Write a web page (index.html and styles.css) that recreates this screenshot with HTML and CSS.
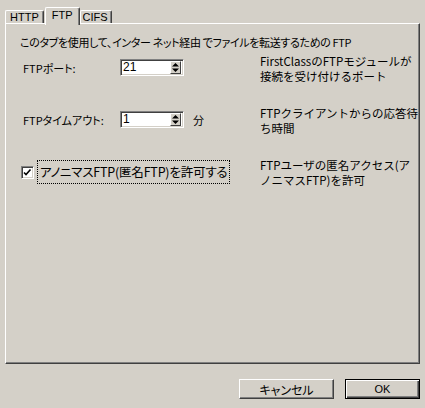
FILE: index.html
```html
<!DOCTYPE html>
<html lang="ja">
<head>
<meta charset="utf-8">
<link rel="stylesheet" href="styles.css">
</head>
<body>
<div class="dialog">
  <div class="tabs">
    <div class="tab">HTTP</div>
    <div class="tab active">FTP</div>
    <div class="tab cifs">CIFS</div>
  </div>
  <div class="panel">
    <div class="intro">このタブを使用して、インター ネット経由 でファイルを転送するための FTP</div>
    <div class="rows">
      <div class="row">
        <div class="left">
          <span class="label">FTPポート:</span>
          <div class="spin"><span class="val">21</span><span class="spinbtn"><svg width="9" height="11" viewBox="0 0 9 11"><path d="M4.5 1 L8 4.5 L1 4.5 Z M1 6.5 L8 6.5 L4.5 10 Z" fill="#000"/></svg></span></div>
        </div>
        <div class="desc">FirstClassのFTPモジュールが<br>接続を受け付けるポート</div>
      </div>
      <div class="row">
        <div class="left">
          <span class="label">FTPタイムアウト:</span>
          <div class="spin"><span class="val">1</span><span class="spinbtn"><svg width="9" height="11" viewBox="0 0 9 11"><path d="M4.5 1 L8 4.5 L1 4.5 Z M1 6.5 L8 6.5 L4.5 10 Z" fill="#000"/></svg></span></div>
          <span class="unit">分</span>
        </div>
        <div class="desc">FTPクライアントからの応答待<br>ち時間</div>
      </div>
      <div class="row">
        <div class="left check">
          <span class="box"><svg width="9" height="9" viewBox="0 0 9 9"><path d="M1 4.5 L3 6.5 L7.5 1.5" stroke="#000" stroke-width="1.6" fill="none"/></svg></span>
          <span class="cblabel">アノニマスFTP(匿名FTP)を許可する</span>
        </div>
        <div class="desc">FTPユーザの匿名アクセス(ア<br>ノニマスFTP)を許可</div>
      </div>
    </div>
  </div>
  <div class="buttons">
    <div class="btn cancel">キャンセル</div>
    <div class="btn ok">OK</div>
  </div>
</div>
</body>
</html>
```
FILE: styles.css
```css
html, body {
  margin: 0;
  padding: 0;
  background: #d4d0c8;
}
body {
  width: 425px;
  height: 408px;
  overflow: hidden;
  font-family: "Noto Sans CJK JP", "Liberation Sans", sans-serif;
  font-size: 11px;
  color: #000;
  font-feature-settings: "palt";
}
.dialog {
  display: flex;
  flex-direction: column;
}
.tabs {
  display: flex;
  align-items: flex-end;
  height: 23px;
  padding-left: 5px;
}
.tab {
  height: 12px;
  line-height: 12px;
  padding: 0 4px;
  font-size: 11px;
  font-family: "Liberation Sans", sans-serif;
  border-top: 1px solid #fff;
  border-left: 1px solid #fff;
  border-right: 1px solid #404040;
  box-shadow: inset -1px 0 0 #808080;
  border-radius: 2px 2px 0 0;
}
.tab.cifs {
  padding: 0 3px 0 2px;
}
.tab.active {
  position: relative;
  z-index: 1;
  height: 17px;
  line-height: 15px;
  margin-bottom: -2px;
  margin-left: 1px;
  background: #d4d0c8;
  padding: 0 6px;
}
.panel {
  margin-left: 5px;
  width: 415px;
  height: 341px;
  box-sizing: border-box;
  border-top: 1px solid #fff;
  border-left: 1px solid #fff;
  border-right: 1px solid #404040;
  border-bottom: 1px solid #404040;
  box-shadow: inset -1px -1px 0 #808080;
  padding: 11px 0 0 14px;
}
.intro {
  line-height: 14px;
  white-space: nowrap;
  letter-spacing: -0.35px;
}
.rows {
  display: flex;
  flex-direction: column;
  gap: 22px;
  margin-top: 6px;
}
.row {
  display: flex;
  height: 30px;
  align-items: flex-start;
}
.left {
  width: 240px;
  display: flex;
  align-items: center;
  margin-top: 4px;
  padding-left: 3px;
  box-sizing: border-box;
}
.label {
  width: 97px;
  white-space: nowrap;
}
.spin {
  width: 64px;
  height: 17px;
  box-sizing: border-box;
  background: #fff;
  border-top: 1px solid #808080;
  border-left: 1px solid #808080;
  border-right: 1px solid #fff;
  border-bottom: 1px solid #fff;
  box-shadow: inset 1px 1px 0 #404040, inset -1px -1px 0 #d4d0c8;
  display: flex;
  align-items: center;
  justify-content: space-between;
  padding: 0 2px 0 2px;
}
.val {
  font-family: "Liberation Sans", sans-serif;
  font-size: 12px;
  line-height: 13px;
}
.spinbtn {
  width: 11px;
  height: 13px;
  box-sizing: border-box;
  background: #d4d0c8;
  border-top: 1px solid #fff;
  border-left: 1px solid #fff;
  border-right: 1px solid #404040;
  border-bottom: 1px solid #404040;
  display: flex;
  align-items: center;
  justify-content: center;
}
.spinbtn svg {
  display: block;
}
.unit {
  margin-left: 9px;
}
.desc {
  line-height: 15px;
  white-space: nowrap;
  font-size: 11.5px;
  font-feature-settings: normal;
  letter-spacing: 0;
  margin-top: -1px;
}
.check {
  margin-top: 1px;
  padding-left: 1px;
}
.box {
  width: 13px;
  height: 13px;
  box-sizing: border-box;
  background: #fff;
  border-top: 1px solid #808080;
  border-left: 1px solid #808080;
  border-right: 1px solid #fff;
  border-bottom: 1px solid #fff;
  box-shadow: inset 1px 1px 0 #404040, inset -1px -1px 0 #d4d0c8;
  display: flex;
  align-items: center;
  justify-content: center;
}
.cblabel {
  margin-left: 3px;
  border: 1px dotted #000;
  height: 22px;
  line-height: 22px;
  padding: 0 2px;
  font-size: 12.5px;
  letter-spacing: -0.2px;
  white-space: nowrap;
}
.buttons {
  display: flex;
  justify-content: flex-end;
  gap: 11px;
  margin-top: 15px;
  padding-right: 5px;
}
.btn {
  height: 20px;
  box-sizing: border-box;
  display: flex;
  align-items: center;
  justify-content: center;
  background: #d4d0c8;
  border-top: 1px solid #fff;
  border-left: 1px solid #fff;
  border-right: 1px solid #404040;
  border-bottom: 1px solid #404040;
  box-shadow: inset -1px -1px 0 #808080;
}
.cancel {
  width: 95px;
  font-size: 12px;
}
.ok {
  width: 75px;
  border: 1px solid #000;
  box-shadow: inset 1px 1px 0 #fff, inset -1px -1px 0 #404040, inset -2px -2px 0 #808080;
  font-family: "Liberation Sans", sans-serif;
  font-size: 11px;
}
```
